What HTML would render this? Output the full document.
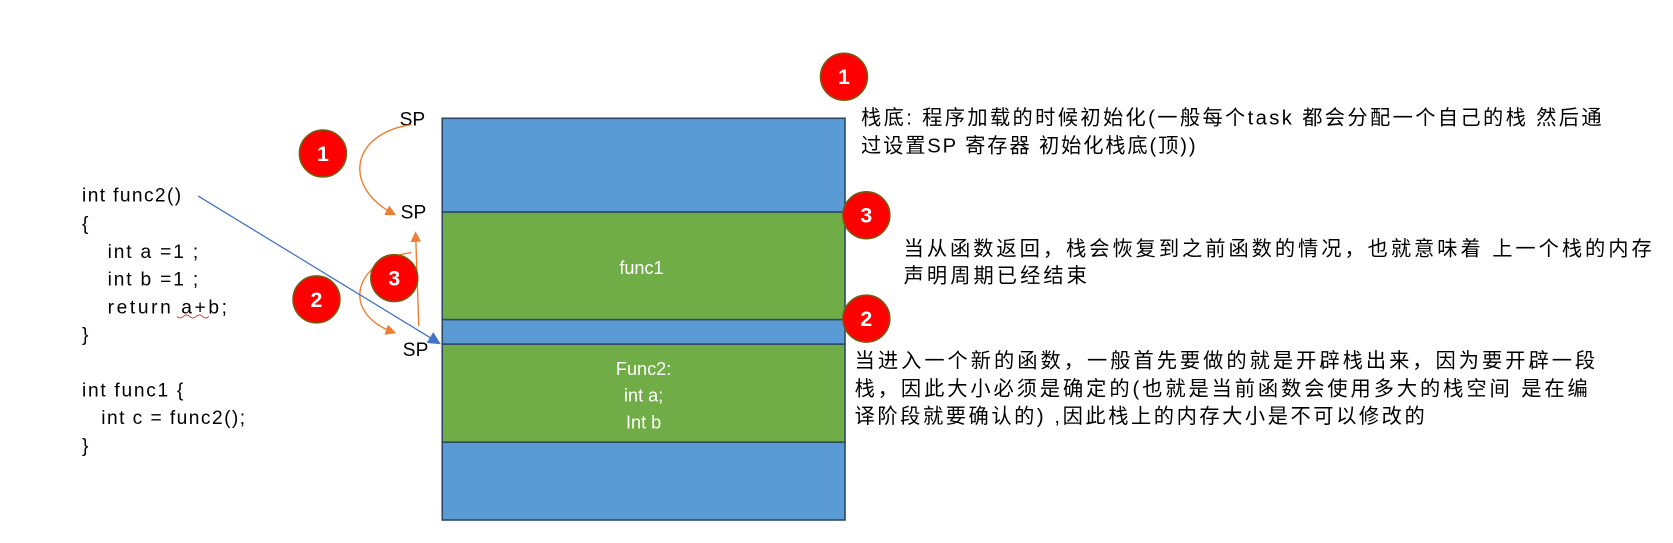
<!DOCTYPE html>
<html><head><meta charset="utf-8"><style>
body{margin:0;background:#fff;}
svg{display:block;}
text{font-family:"Liberation Sans","Noto Sans CJK SC",sans-serif;}
</style></head><body>
<svg width="1673" height="543" viewBox="0 0 1570 509.6" preserveAspectRatio="none" xmlns="http://www.w3.org/2000/svg">
<defs>
<marker id="ao" markerWidth="10" markerHeight="10" refX="8" refY="5" orient="auto" markerUnits="userSpaceOnUse"><path d="M0,0 L10,5 L0,10 Z" fill="#ed7d31"/></marker>
<marker id="ab" markerWidth="12" markerHeight="12" refX="10" refY="6" orient="auto" markerUnits="userSpaceOnUse"><path d="M0,0 L12,6 L0,12 Z" fill="#4472c4"/></marker>
</defs>
<g stroke="#2e4a66" stroke-width="1.5">
<rect x="415" y="111" width="378" height="88" fill="#5b9bd5"/>
<rect x="415" y="199" width="378" height="101" fill="#70ad47"/>
<rect x="415" y="300" width="378" height="23" fill="#5b9bd5"/>
<rect x="415" y="323" width="378" height="92" fill="#70ad47"/>
<rect x="415" y="415" width="378" height="73" fill="#5b9bd5"/>
</g>
<g fill="#fff" font-size="17" text-anchor="middle">
<text x="602" y="257">func1</text>
<text x="604" y="352">Func2:</text>
<text x="604" y="377">int a;</text>
<text x="604" y="402">Int b</text>
</g>
<g font-size="18" fill="#000">
<text x="375" y="118">SP</text>
<text x="376" y="205">SP</text>
<text x="378" y="334">SP</text>
<text x="77" y="189" textLength="93">int func2()</text>
<text x="77" y="216">{</text>
<text x="101" y="242" textLength="85">int a =1 ;</text>
<text x="101" y="268" textLength="85">int b =1 ;</text>
<text x="101" y="294" textLength="112">return a+b;</text>
<text x="77" y="320">}</text>
<text x="77" y="372" textLength="95">int func1 {</text>
<text x="95" y="398" textLength="135">int c = func2();</text>
<text x="77" y="424">}</text>
</g>
<g font-size="19" fill="#000" lengthAdjust="spacing">
<text x="808" y="117" textLength="695">栈底: 程序加载的时候初始化(一般每个task 都会分配一个自己的栈 然后通</text>
<text x="808" y="143" textLength="314">过设置SP 寄存器 初始化栈底(顶))</text>
<text x="848" y="240" textLength="702">当从函数返回，栈会恢复到之前函数的情况，也就意味着 上一个栈的内存</text>
<text x="848" y="265" textLength="172">声明周期已经结束</text>
<text x="802" y="345" textLength="695">当进入一个新的函数，一般首先要做的就是开辟栈出来，因为要开辟一段</text>
<text x="802" y="371" textLength="688">栈，因此大小必须是确定的(也就是当前函数会使用多大的栈空间 是在编</text>
<text x="802" y="397" textLength="535">译阶段就要确认的) ,因此栈上的内存大小是不可以修改的</text>
</g>
<path d="M166,297 q3,3 6,0 q3,-3 6,0 q3,3 6,0 q3,-3 6,0 q3,3 6,0" stroke="#e03030" stroke-width="0.8" fill="none"/>
<g stroke="#ed7d31" stroke-width="1.3" fill="none">
<path d="M386,117 C330,125 320,175 370,201" marker-end="url(#ao)"/>
<path d="M386,237 C330,245 320,295 370,312" marker-end="url(#ao)"/>
<path d="M393,306 L390,219" marker-end="url(#ao)"/>
</g>
<line x1="186" y1="184" x2="412" y2="322" stroke="#4472c4" stroke-width="1.2" marker-end="url(#ab)"/>
<g fill="#f00" stroke="#7a5a10" stroke-width="1.5">
<circle cx="303" cy="144" r="22"/>
<circle cx="297" cy="281" r="22"/>
<circle cx="370" cy="261" r="22"/>
<circle cx="792" cy="72" r="22"/>
<circle cx="813" cy="202" r="22"/>
<circle cx="813" cy="299" r="22"/>
</g>
<g fill="#fff" font-size="20" font-weight="bold" text-anchor="middle">
<text x="303" y="151">1</text>
<text x="297" y="288">2</text>
<text x="370" y="268">3</text>
<text x="792" y="79">1</text>
<text x="813" y="209">3</text>
<text x="813" y="306">2</text>
</g>
</svg>
</body></html>
